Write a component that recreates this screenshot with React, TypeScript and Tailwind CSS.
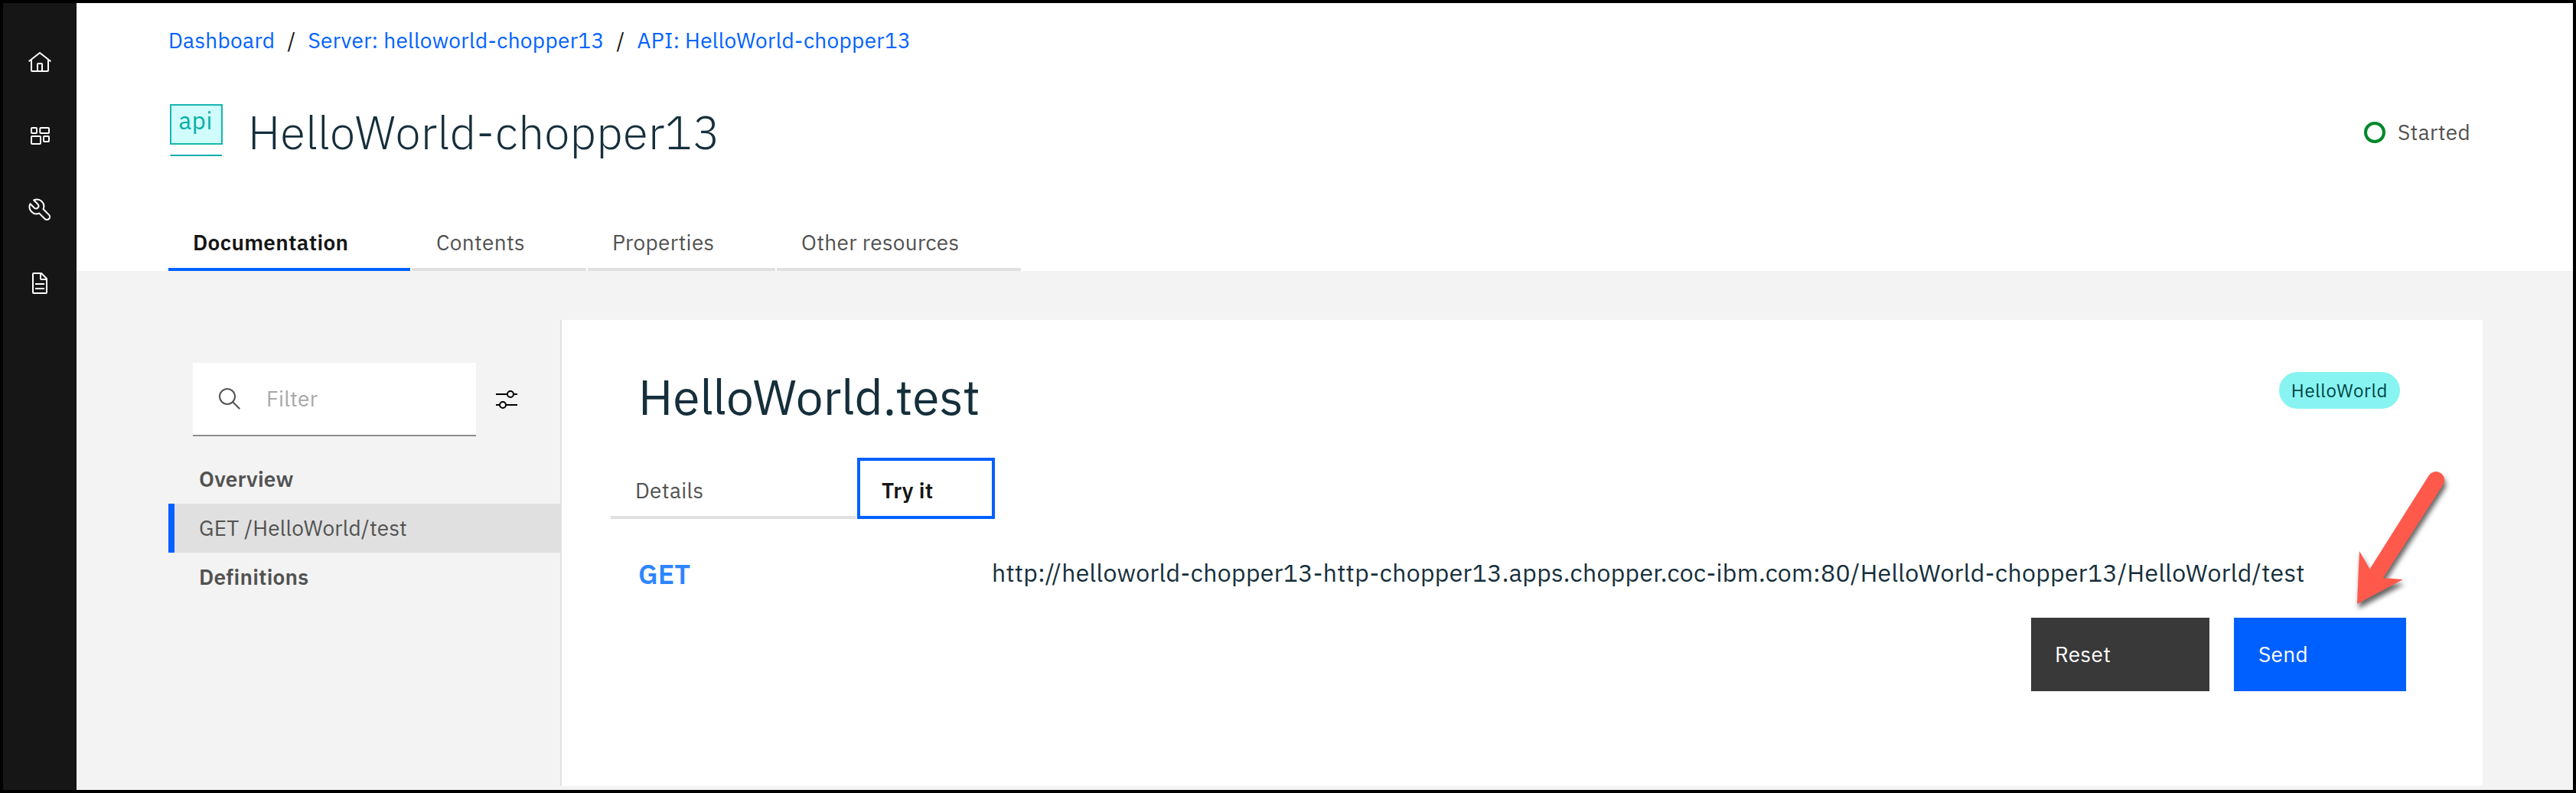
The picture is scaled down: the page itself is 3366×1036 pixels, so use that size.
import type { ReactNode } from "react";

function HomeIcon() {
  return (
    <svg viewBox="0 0 32 32" className="size-8" fill="currentColor">
      <path d="M16.6123,2.2138a1.01,1.01,0,0,0-1.2427,0L1,13.4194l1.2427,1.5717L4,13.6208V26a2.0041,2.0041,0,0,0,2,2H26a2.0037,2.0037,0,0,0,2-2V13.63L29.7573,15,31,13.4282ZM18,26H14V18h4Zm2,0V18a2.0023,2.0023,0,0,0-2-2H14a2.002,2.002,0,0,0-2,2v8H6V12.0615l10-7.79,10,7.8005V26Z" />
    </svg>
  );
}

function DashboardIcon() {
  return (
    <svg viewBox="0 0 32 32" className="size-8" fill="none" stroke="currentColor" strokeWidth="2">
      <rect x="5" y="5" width="7" height="7" rx="1" />
      <rect x="16.3" y="5" width="11.7" height="7" rx="1" />
      <rect x="5" y="16" width="12" height="10" rx="1" />
      <rect x="21" y="16" width="7" height="7" rx="1" />
    </svg>
  );
}

function WrenchIcon() {
  return (
    <svg viewBox="0 0 32 32" className="size-8" fill="none" stroke="currentColor" strokeWidth="2" strokeLinejoin="round">
      <path d="M8.2 3.5A9.1 9.1 0 0 1 20.6 15.2L28 22.6A3.8 3.8 0 0 1 22.6 28L15.2 20.6A9.1 9.1 0 0 1 3.5 8.2L9 13.7A3.35 3.35 0 0 0 13.7 9Z" />
    </svg>
  );
}

function DocumentIcon() {
  return (
    <svg viewBox="0 0 32 32" className="size-8" fill="currentColor">
      <path d="M25.7,9.3l-7-7A.9.9,0,0,0,18,2H8A2,2,0,0,0,6,4V28a2,2,0,0,0,2,2H24a2,2,0,0,0,2-2V10A.9.9,0,0,0,25.7,9.3ZM18,4.4,23.6,10H18ZM24,28H8V4h8v6a2,2,0,0,0,2,2h6Z" />
      <rect x="10" y="22" width="12" height="2" />
      <rect x="10" y="16" width="12" height="2" />
    </svg>
  );
}

function ApiIcon() {
  return (
    <svg viewBox="0 0 72 72" className="mb-[5px] size-[72px]">
      <rect x="3" y="3" width="67" height="51" fill="#d0fdfb" stroke="#00aea8" strokeWidth="1.8" />
      <path d="M2.5 69H70" stroke="#00aea8" strokeWidth="2" />
      <text x="13.5" y="35" fill="#00aea8" fontSize="31" letterSpacing="0.7">
        api
      </text>
    </svg>
  );
}

function SearchIcon() {
  return (
    <svg viewBox="0 0 32 32" className="size-8" fill="none" stroke="#525252" strokeWidth="2">
      <circle cx="13" cy="13" r="10" />
      <path d="M20 20L29.3 29.3" />
    </svg>
  );
}

function AdjustIcon() {
  return (
    <svg viewBox="0 0 32 32" className="size-8" fill="none" stroke="#000" strokeWidth="2">
      <path d="M2 9H17M25 9H30M2 23H7M15 23H30" />
      <circle cx="21" cy="9" r="4" />
      <circle cx="11" cy="23" r="4" />
    </svg>
  );
}

function PointerArrow() {
  return (
    <svg
      viewBox="0 0 140 200"
      className="absolute left-[2330px] top-[182px] h-[200px] w-[140px] drop-shadow-[2px_6px_3px_rgba(0,0,0,0.6)]"
    >
      <path
        fill="#ff594c"
        d="M16 189L19 120L32.5 143.5L109.5 21.5A10.8 10.8 0 0 1 128.5 33L50 155L76 157Z"
      />
    </svg>
  );
}

function Tab({ className, active, children }: { className: string; active?: boolean; children: ReactNode }) {
  return (
    <div
      className={`flex h-20 items-center border-b-4 pl-8 pt-[9px] ${
        active ? "border-[#0060ff] font-semibold text-[#161616]" : "border-[#e0e0e0] text-[#525252]"
      } ${className}`}
    >
      {children}
    </div>
  );
}

export default function App() {
  return (
    <div className="flex h-[1036px] w-[3366px] whitespace-nowrap border-4 border-black bg-[#f3f3f3] font-['IBM_Plex_Sans',Roboto,sans-serif] text-[28px] leading-9 tracking-[0.32px]">
      <nav className="flex w-24 shrink-0 flex-col items-center gap-16 bg-[#161616] pt-[62px] text-white">
        <HomeIcon />
        <DashboardIcon />
        <WrenchIcon />
        <DocumentIcon />
      </nav>

      <div className="flex flex-1 flex-col">
        <header className="flex h-[350px] flex-col bg-white pl-[120px] pt-[30px]">
          <div className="flex h-[37px] items-center gap-4 text-[#0062ff]">
            <a>Dashboard</a>
            <span className="text-[#161616]">/</span>
            <a>Server: helloworld-chopper13</a>
            <span className="text-[#161616]">/</span>
            <a>API: HelloWorld-chopper13</a>
          </div>

          <div className="mt-[62px] flex h-[79px] items-center">
            <ApiIcon />
            <h1 className="ml-8 text-[60px] font-light leading-[79px] tracking-[0.28px] text-[#152f3b]">HelloWorld-chopper13</h1>
            <div className="ml-auto mr-[134px] flex items-center gap-4 text-[#525252]">
              <span className="size-7 rounded-full border-4 border-[#00882b]" />
              <span>Started</span>
            </div>
          </div>

          <div className="mt-auto flex gap-0.5">
            <Tab className="w-[316px]" active>Documentation</Tab>
            <Tab className="w-[228px]">Contents</Tab>
            <Tab className="w-[245px]">Properties</Tab>
            <Tab className="w-[319px]">Other resources</Tab>
          </div>
        </header>

        <main className="flex h-[673px] pl-[120px] pt-16">
          <aside className="w-[512px] shrink-0 pt-14 text-[#525252]">
            <div className="flex items-center gap-6 pl-8">
              <div className="flex h-24 w-[370px] items-center border-b-2 border-[#8d8d8d] bg-white pl-8 text-[#a8a8a8]">
                <SearchIcon />
                <span className="ml-8">Filter</span>
              </div>
              <AdjustIcon />
            </div>
            <div className="mt-6 tracking-[0.2px]">
              <div className="flex h-16 items-center pl-10 font-semibold">Overview</div>
              <div className="flex h-16 items-center border-l-8 border-[#0060ff] bg-[#e0e0e0] pl-8">
                GET /HelloWorld/test
              </div>
              <div className="flex h-16 items-center pl-10 font-semibold">Definitions</div>
            </div>
          </aside>

          <section className="relative w-[2512px] border-l-2 border-[#dfe3e6] bg-white pt-[60px]">
            <div className="flex h-20 items-start justify-between pl-[100px] pr-[108px]">
              <h2 className="text-[64px] leading-[80px] tracking-normal text-[#152f3b]">HelloWorld.test</h2>
              <span className="mt-2 flex h-12 w-[158px] items-center justify-center rounded-full bg-[#87f4f1] text-2xl tracking-[0.64px] text-[#004548]">
                HelloWorld
              </span>
            </div>

            <div className="mt-10 flex gap-0.5 pl-16">
              <Tab className="w-[320px]">Details</Tab>
              <div className="flex h-20 w-[180px] items-center border-4 border-[#0060ff] pl-7 pt-[5px] font-semibold text-[#161616]">
                Try it
              </div>
            </div>

            <div className="flex items-start pl-[100px] pt-[50px]">
              <span className="w-[462px] text-4xl font-semibold leading-[43px] tracking-normal text-[#2d85ff]">GET</span>
              <span className="text-[32px] leading-10 text-[#152f3b]">
                http://helloworld-chopper13-http-chopper13.apps.chopper.coc-ibm.com:80/HelloWorld-chopper13/HelloWorld/test
              </span>
            </div>

            <div className="mt-9 flex justify-end gap-8 pr-[100px] text-white">
              <button className="h-24 w-[233px] bg-[#393939] pl-[31px] text-left">Reset</button>
              <button className="h-24 w-[225px] bg-[#0060ff] pl-8 text-left">Send</button>
            </div>

            <PointerArrow />
          </section>
        </main>
      </div>
    </div>
  );
}
